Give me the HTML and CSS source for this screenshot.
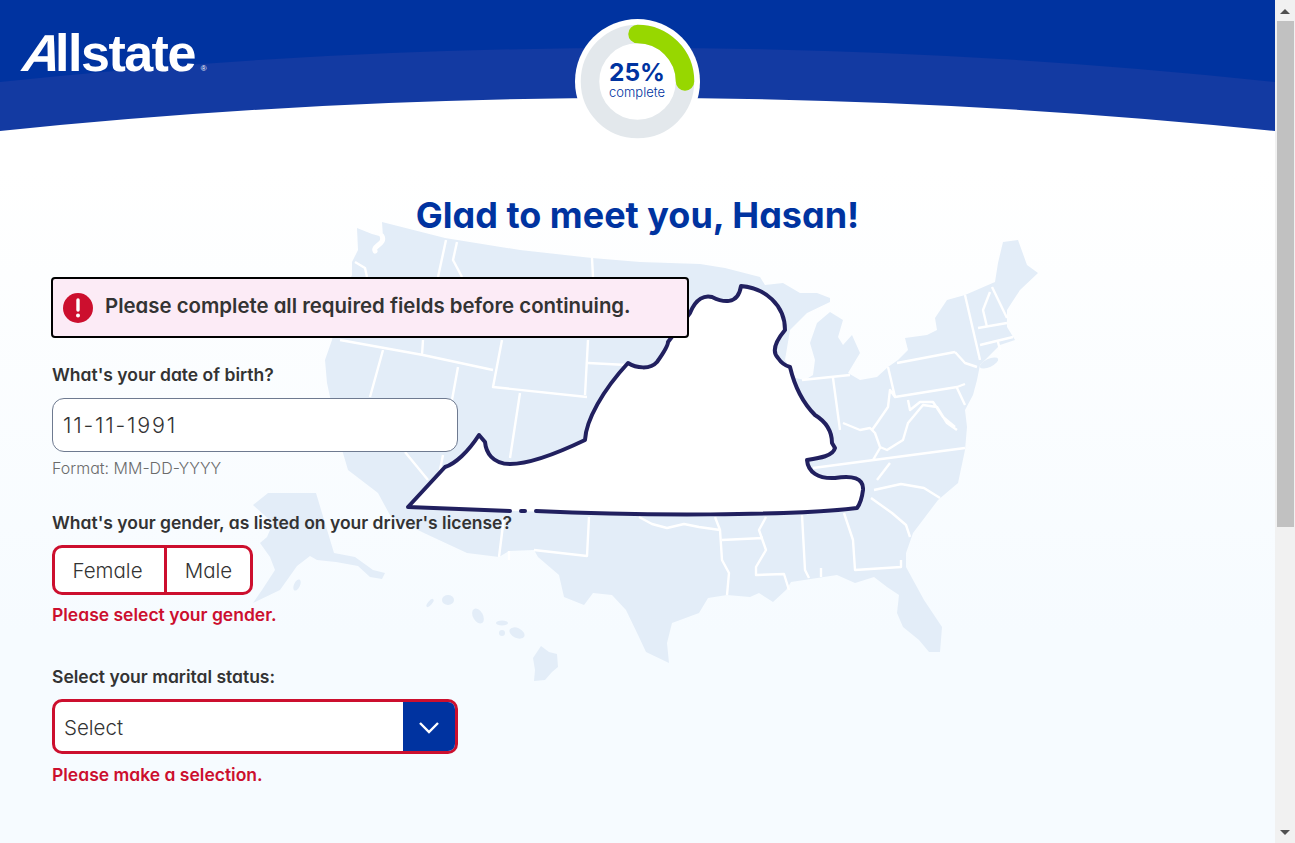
FILE: index.html
```html
<!DOCTYPE html>
<html>
<head>
    <title>Glad to meet you</title>
    <link rel="stylesheet" href="styles.css">
</head>
<body>
    <div class="window">
        <div class="page">
            <svg class="backdrop" width="1275" height="843" viewBox="0 0 1275 843">
                <path class="band-dark" d="M0 0H1275V131H0Z"/>
                <path class="band-light" d="M0 82Q637 14 1275 82V131H0Z"/>
                <path class="band-white" d="M0 131Q637 65 1275 131V140H0Z"/>
                <g class="land">
                    <path d="M382 222L445 238L520 250L592 258L640 262L700 264L725 268L760 277L765 285L783 283L800 293L817 293L830 298L830 302L807 313L790 330L785 360L795 378L805 380L813 375L815 360L810 343L817 323L830 312L843 320L838 337L843 345L852 335L860 353L848 373L860 380L877 377L888 367L898 360L908 350L905 338L927 335L937 330L935 318L947 300L965 295L995 282L998 263L1003 242L1018 240L1027 265L1038 273L1020 290L1007 310L1007 327L1015 340L1000 345L980 365L977 380L973 395L965 410L967 427L965 450L958 483L938 500L913 533L906 553L906 567L924 600L942 627L940 652L929 652L919 640L903 627L897 613L899 595L887 587L874 577L855 583L837 575L791 582L786 590L773 602L759 593L750 597L727 595L708 598L699 613L672 623L667 643L669 663L646 652L639 637L626 610L612 595L593 593L584 605L564 597L559 575L538 557L534 550L509 551L499 557L467 553L424 533L391 517L378 493L348 470L343 453L335 420L327 383L325 360L332 340L340 300L352 275L352 262L358 250L357 228L372 234L383 237Z"/>
                    <path d="M268 493L316 493L334 553L355 557L373 570L385 573L382 579L370 577L358 566L336 562L317 560L310 556L297 566L280 590L253 603L262 590L275 570L270 557L260 543L267 537L273 523L253 505Z"/>
                    <ellipse cx="989" cy="363" rx="10" ry="4" transform="rotate(-25 989 363)"/>
                    <ellipse cx="297" cy="585" rx="3" ry="6" transform="rotate(25 297 585)"/>
                    <ellipse cx="448" cy="600" rx="6" ry="5"/>
                    <ellipse cx="430" cy="603" rx="2" ry="5" transform="rotate(40 430 603)"/>
                    <ellipse cx="478" cy="616" rx="5" ry="8" transform="rotate(-30 478 616)"/>
                    <ellipse cx="502" cy="623" rx="6" ry="2.5"/>
                    <ellipse cx="502" cy="633" rx="3" ry="3"/>
                    <ellipse cx="517" cy="633" rx="8" ry="5" transform="rotate(25 517 633)"/>
                    <path d="M533 658L541 646L549 652L557 654L558 667L552 672L545 680L534 681L535 670Z"/>
                </g>
                <g class="borders">
                    <path class="inlet" d="M382 236C386 244 372 246 375 251"/>
                    <path d="M355 262L365 268L367 277M446 240L438 277M457 242L453 260L462 277"/>
                    <path d="M592 258L593 277M340 340L423 355L493 370M383 350L370 397M423 340L422 355M458 367L452 400M502 340L493 387L587 397M520 393L510 458M588 340L585 395M588 363L627 365M405 452L428 480"/>
                    <path d="M443 455L437 485M504 517L499 557M589 517L587 556L534 550M509 551L509 560M639 517L652 524L667 528L684 524L699 527L720 530M715 517L720 530L722 560L729 573L727 595M722 540L763 538M766 517L759 530L766 550L756 567L756 575L784 574L789 590M802 515L805 570L809 578M844 513L853 540L855 570L901 567L901 560M821 568L821 577M871 498L892 513L906 525L910 537M874 490L901 484L924 488L940 498"/>
                    <path d="M802 380L850 375M833 378L840 430M843 423L860 430L870 428L875 433L880 447L887 450L903 440L908 423L923 405L937 407L947 423L957 430M888 367L895 397L957 387L965 384M955 352L897 363M955 352L965 363L977 367M895 397L890 390L888 407L877 423L872 430M908 400L910 410L920 402L933 402L943 417L955 427M957 388L965 405M965 295L980 360M978 328L1007 323M980 345L1013 337M998 342L1000 350M992 287L1007 318M990 292L983 310L987 327M813 468L965 448M873 460L880 448M890 463L877 480"/>
                </g>
                <g class="virginia">
                    <path class="state-fill" d="M408 507L445 467C455 464 468 452 479 435L485 442C486 452 492 464 510 464C530 464 560 452 585 440C586 420 603 390 628 363C636 368 650 370 657 362C662 355 668 345 668 342L690 313C696 298 705 295 712 297C722 302 738 306 741 286C765 288 785 305 785 330C775 342 772 352 778 358C782 364 786 366 790 367C795 388 805 405 815 415C828 423 832 433 832 443L835 448C833 456 820 458 807 460C808 472 818 479 835 478C852 475 864 478 863 490C862 498 860 504 857 508C790 516 620 516 408 507Z"/>
                    <path class="state-line" d="M510 511L408 507L445 467C455 464 468 452 479 435L485 442C486 452 492 464 510 464C530 464 560 452 585 440C586 420 603 390 628 363C636 368 650 370 657 362C662 355 668 345 668 342L690 313C696 298 705 295 712 297C722 302 738 306 741 286C765 288 785 305 785 330C775 342 772 352 778 358C782 364 786 366 790 367C795 388 805 405 815 415C828 423 832 433 832 443L835 448C833 456 820 458 807 460C808 472 818 479 835 478C852 475 864 478 863 490C862 498 860 504 857 508C790 516 640 516 536 511"/>
                    <path class="state-line" d="M521 511L525 511"/>
                </g>
            </svg>

            <header class="hero">
                <div class="logo"><span class="logo-a">A</span>llstate<span class="logo-mark">®</span></div>
                <div class="progress">
                    <svg class="progress-ring" width="125" height="125" viewBox="0 0 125 125">
                        <circle cx="62.5" cy="62.5" r="62.5" fill="#fff"/>
                        <circle cx="62.5" cy="62.5" r="47.5" fill="none" stroke="#e3e8ec" stroke-width="18.5"/>
                        <path d="M62.5 15A47.5 47.5 0 0 1 110 62.5" fill="none" stroke="#97d700" stroke-width="18.5" stroke-linecap="round"/>
                    </svg>
                    <div class="progress-text">
                        <strong>25%</strong>
                        <span>complete</span>
                    </div>
                </div>
                <div></div>
            </header>

            <main class="content">
                <h1>Glad to meet you, Hasan!</h1>

                <div class="alert">
                    <svg class="alert-icon" width="30" height="30" viewBox="0 0 30 30">
                        <circle cx="15" cy="15" r="15" fill="#cc0f2e"/>
                        <path d="M15 7V17" stroke="#fff" stroke-width="3.4" stroke-linecap="round"/>
                        <circle cx="15" cy="22.5" r="2" fill="#fff"/>
                    </svg>
                    <span class="alert-text">Please complete all required fields before continuing.</span>
                </div>

                <form class="fields">
                    <label class="field-label">What's your date of birth?</label>
                    <div class="text-input">11-11-1991</div>
                    <p class="hint">Format: MM-DD-YYYY</p>

                    <label class="field-label gender-label">What's your gender, as listed on your driver's license?</label>
                    <div class="toggle">
                        <div class="toggle-option female">Female</div>
                        <div class="toggle-option male">Male</div>
                    </div>
                    <p class="error">Please select your gender.</p>

                    <label class="field-label marital-label">Select your marital status:</label>
                    <div class="select-box">
                        <span class="select-value">Select</span>
                        <span class="select-arrow">
                            <svg width="22" height="14" viewBox="0 0 22 14"><path d="M2 3L11 12L20 3" fill="none" stroke="#fff" stroke-width="2.4"/></svg>
                        </span>
                    </div>
                    <p class="error select-error">Please make a selection.</p>
                </form>
            </main>
        </div>

        <div class="scrollbar">
            <div class="arrow-up"></div>
            <div class="thumb"></div>
            <div class="arrow-down"></div>
        </div>
    </div>
</body>
</html>
```

FILE: styles.css
```css
body {
    margin: 0;
    font-family: Inter, "Open Sans", sans-serif;
    font-feature-settings: "cv11" 1;
    color: #333;
}
.window {
    display: flex;
    height: 843px;
    overflow: hidden;
}
.page {
    position: relative;
    width: 1275px;
    height: 843px;
    overflow: hidden;
    background: linear-gradient(#fff 20%, #f6fbff 75%);
}
.backdrop {
    position: absolute;
    left: 0;
    top: 0;
}
.band-dark {
    fill: #0033a0;
}
.band-light {
    fill: #133aa2;
}
.band-white {
    fill: #fff;
}
.land {
    fill: #e3edf8;
}
.borders {
    fill: none;
    stroke: #fff;
    stroke-width: 2.4;
    stroke-linejoin: round;
}
.inlet {
    stroke-width: 5;
    stroke-linecap: round;
}
.state-fill {
    fill: #fff;
}
.state-line {
    fill: none;
    stroke: #21205f;
    stroke-width: 4;
    stroke-linecap: round;
    stroke-linejoin: round;
}
.hero {
    position: relative;
    display: grid;
    grid-template-columns: 1fr auto 1fr;
    height: 144px;
    padding-top: 19px;
    box-sizing: border-box;
}
.logo {
    padding: 8px 0 0 19px;
    font-family: "Liberation Sans", Arial, sans-serif;
    font-feature-settings: normal;
    font-size: 52px;
    line-height: 52px;
    font-weight: bold;
    letter-spacing: -1.5px;
    color: #fff;
}
.logo-a {
    display: inline-block;
    transform: skewX(-18deg);
    transform-origin: 0 85%;
}
.logo-mark {
    margin-left: 6px;
    font-size: 8px;
    font-weight: normal;
    letter-spacing: 0;
}
.progress {
    position: relative;
    width: 125px;
    height: 125px;
    margin-left: -1px;
}
.progress-ring {
    display: block;
}
.progress-text {
    position: absolute;
    left: 0;
    right: 0;
    top: 39px;
    display: flex;
    flex-direction: column;
    align-items: center;
    color: #0033a0;
}
.progress-text strong {
    font-size: 24.5px;
    line-height: 28px;
}
.progress-text span {
    font-size: 13px;
    line-height: 12px;
    font-weight: 300;
}
.content {
    position: relative;
    padding: 48px 0 0 52px;
}
h1 {
    margin: 0 0 39px -52px;
    text-align: center;
    font-size: 36px;
    line-height: 46px;
    font-weight: 700;
    color: #0033a0;
}
.alert {
    display: flex;
    align-items: center;
    gap: 12px;
    width: 624px;
    height: 57px;
    margin-left: -1px;
    padding-left: 10px;
    border: 2px solid #000;
    border-radius: 4px;
    background-color: #fcebf6;
    font-size: 20.4px;
    font-weight: 600;
}
.alert-text {
    margin-bottom: 4px;
}
.alert-icon {
    flex: none;
}
.fields {
    width: 406px;
    margin-top: 25px;
}
.field-label {
    display: block;
    font-size: 17.5px;
    line-height: 24px;
    font-weight: 600;
    white-space: nowrap;
}
.text-input {
    height: 52px;
    margin-top: 11px;
    padding-left: 10px;
    border: 1px solid #6e7a90;
    border-radius: 12px;
    background-color: #fff;
    font-size: 21.5px;
    font-weight: 300;
    letter-spacing: 1.8px;
    line-height: 52px;
}
.hint {
    margin: 6px 0 0;
    font-size: 16px;
    line-height: 20px;
    color: #6b6b6b;
    font-weight: 300;
}
.gender-label {
    margin-top: 33px;
}
.toggle {
    display: inline-flex;
    height: 44px;
    margin-top: 10px;
    border: 3px solid #cc0f2e;
    border-radius: 10px;
    background-color: #fff;
    font-size: 20.5px;
    font-weight: 300;
    line-height: 46px;
}
.toggle-option {
    text-align: center;
}
.female {
    width: 105px;
    padding-right: 4px;
    border-right: 3px solid #cc0f2e;
}
.male {
    width: 83px;
}
.error {
    margin: 8px 0 0;
    font-size: 17.5px;
    line-height: 24px;
    font-weight: 600;
    color: #cc0f2e;
}
.select-error {
    margin-top: 9px;
}
.marital-label {
    margin-top: 38px;
}
.select-box {
    display: flex;
    justify-content: space-between;
    height: 49px;
    margin-top: 10px;
    border: 3px solid #cc0f2e;
    border-radius: 10px;
    background-color: #fff;
    overflow: hidden;
}
.select-value {
    padding-left: 9px;
    font-size: 20.5px;
    font-weight: 300;
    line-height: 51px;
}
.select-arrow {
    display: flex;
    align-items: center;
    justify-content: center;
    width: 52px;
    background-color: #0033a0;
}
.scrollbar {
    display: flex;
    flex-direction: column;
    align-items: center;
    width: 20px;
    height: 843px;
    background-color: #f1f1f1;
}
.arrow-up {
    width: 0;
    height: 0;
    margin-top: 9px;
    border-left: 5px solid transparent;
    border-right: 5px solid transparent;
    border-bottom: 5px solid #505050;
}
.thumb {
    width: 17px;
    height: 506px;
    margin-top: 7px;
    background-color: #c1c1c1;
}
.arrow-down {
    width: 0;
    height: 0;
    margin-top: auto;
    margin-bottom: 8px;
    border-left: 5px solid transparent;
    border-right: 5px solid transparent;
    border-top: 5px solid #505050;
}
```
